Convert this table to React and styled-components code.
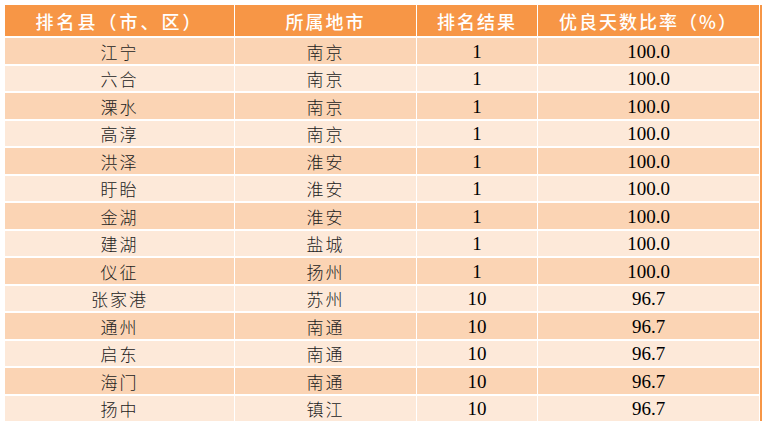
import React from "react";
import styled, { createGlobalStyle } from "styled-components";

const GlobalStyle = createGlobalStyle`
  html, body {
    margin: 0;
    padding: 0;
    background: #ffffff;
  }
`;

const Page = styled.div`
  padding: 5px 0 0 5px;
  width: 767px;
  height: 426px;
  box-sizing: border-box;
  background: #ffffff;
`;

const Table = styled.div`
  display: grid;
  grid-template-columns: 229px 181px 120px 221px;
  grid-template-rows: 31px;
  grid-auto-rows: 25.5px;
  column-gap: 1px;
  row-gap: 2px;
  width: 754px;
  background: #ffffff;
  border-right: 1px solid #ffffff;
  box-shadow: 2px 0 0 #f79646;
`;

const HeadCell = styled.div`
  background: #f79646;
  color: #ffffff;
  font-family: "Noto Sans CJK SC", "Liberation Serif", sans-serif;
  font-weight: 500;
  font-size: 18px;
  letter-spacing: ${(p) => p.$spacing || "1px"};
  display: flex;
  align-items: center;
  justify-content: center;
  white-space: nowrap;
`;

const Cell = styled.div`
  background: ${(p) => (p.$odd ? "#fbd4b4" : "#fde9d9")};
  color: ${(p) => (p.$num ? "#000000" : "#222222")};
  font-family: ${(p) =>
    p.$num
      ? `"Liberation Serif", "Times New Roman", serif`
      : `"Noto Sans CJK SC", "Liberation Serif", sans-serif`};
  font-size: ${(p) => (p.$num ? "19px" : "17px")};
  font-weight: ${(p) => (p.$num ? 400 : 300)};
  letter-spacing: ${(p) => (p.$num ? "0" : "2px")};
  display: flex;
  align-items: center;
  justify-content: center;
  line-height: 1;
  padding-top: 1px;
  box-sizing: border-box;
`;

const rows = [
  ["江宁", "南京", "1", "100.0"],
  ["六合", "南京", "1", "100.0"],
  ["溧水", "南京", "1", "100.0"],
  ["高淳", "南京", "1", "100.0"],
  ["洪泽", "淮安", "1", "100.0"],
  ["盱眙", "淮安", "1", "100.0"],
  ["金湖", "淮安", "1", "100.0"],
  ["建湖", "盐城", "1", "100.0"],
  ["仪征", "扬州", "1", "100.0"],
  ["张家港", "苏州", "10", "96.7"],
  ["通州", "南通", "10", "96.7"],
  ["启东", "南通", "10", "96.7"],
  ["海门", "南通", "10", "96.7"],
  ["扬中", "镇江", "10", "96.7"],
];

export default function App() {
  return (
    <>
      <GlobalStyle />
      <Page>
        <Table>
          <HeadCell $spacing="3px">排名县（市、区）</HeadCell>
          <HeadCell $spacing="2px">所属地市</HeadCell>
          <HeadCell $spacing="2px">排名结果</HeadCell>
          <HeadCell $spacing="2px">优良天数比率（%）</HeadCell>
          {rows.map((r, i) => (
            <React.Fragment key={i}>
              <Cell $odd={i % 2 === 0}>{r[0]}</Cell>
              <Cell $odd={i % 2 === 0}>{r[1]}</Cell>
              <Cell $odd={i % 2 === 0} $num>{r[2]}</Cell>
              <Cell $odd={i % 2 === 0} $num>{r[3]}</Cell>
            </React.Fragment>
          ))}
        </Table>
      </Page>
    </>
  );
}
